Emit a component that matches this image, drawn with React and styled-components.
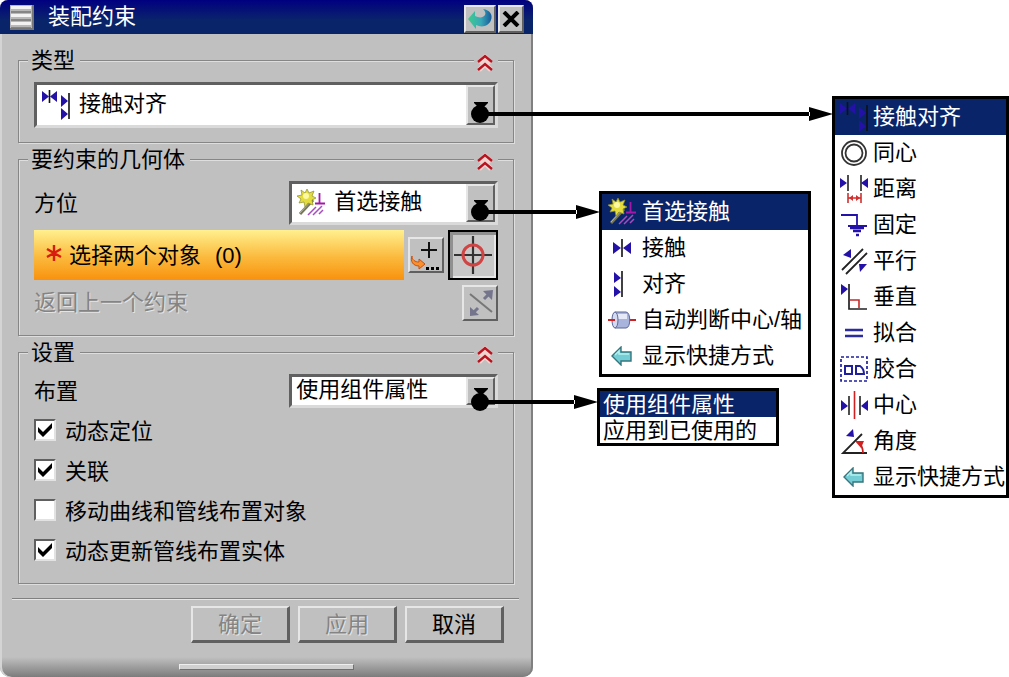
import React, {useState} from "react"
import styled, {createGlobalStyle, css} from "styled-components"

const FACE = "#c0c0c0"
const NAVY = "#0a246a"
const BLUE = "#2412a8"

const GlobalStyle = createGlobalStyle`
  * {
    box-sizing: border-box;
  }

  body {
    margin: 0;
    background: #fff;
    color: #000;
  }

  body, button, select, input {
    font-family: "Liberation Sans", "Noto Sans CJK SC", sans-serif;
    font-size: 22px;
    line-height: 24px;
  }
`

const raised = css`
  border: 2px solid;
  border-color: #e6e6e6 #606060 #606060 #e6e6e6;
  background: ${FACE};
`

const Page = styled.main`
  display: flex;
  align-items: flex-start;
`

const Dialog = styled.form`
  flex: 1;
  min-width: 400px;
  margin-right: 64px;
  border-radius: 8px 8px 10px 10px;
  background: linear-gradient(to top, #7c7c7c, ${FACE} 20px);
  box-shadow: inset 2px 0 #d4d4d4, inset -2px 0 #808080;
`

const TitleBar = styled.header`
  display: flex;
  align-items: center;
  gap: 2px;
  height: 34px;
  padding: 0 9px 0 10px;
  border-radius: 8px 8px 0 0;
  background: linear-gradient(#000080, ${NAVY} 60%);
  color: #fff;
`

const Title = styled.h1`
  flex: 1;
  margin: 0 0 0 12px;
  font-size: 22px;
  font-weight: 400;
  line-height: 24px;
`

const TitleButton = styled.button`
  ${raised}
  display: grid;
  place-items: center;
  width: ${({$wide}) => ($wide ? 32 : 26)}px;
  height: 28px;
  margin-top: 4px;
  padding: 0;
`

const Body = styled.div`
  display: flex;
  flex-direction: column;
  gap: 16px;
  padding: 26px 19px 0 18px;
`

const Group = styled.section`
  border: 1px solid #868686;
  box-shadow: inset 1px 1px #dedede, 1px 1px #dedede;
  padding: 1px 15px ${({$bottom}) => $bottom || 14}px;
`

const GroupHeader = styled.div`
  display: flex;
  justify-content: space-between;
  align-items: center;
  margin: -14px 0 10px -6px;
`

const GroupTitle = styled.h2`
  margin: 0;
  padding: 1px 5px 0 3px;
  background: ${FACE};
  font-size: 22px;
  font-weight: 400;
  line-height: 23px;
`

const CollapseButton = styled.button`
  display: grid;
  place-items: center;
  width: 24px;
  height: 24px;
  padding: 6px 2px 0 0;
  border: 0;
  background: ${FACE};
`

const Rows = styled.div`
  display: flex;
  flex-direction: column;
  gap: 5px;
`

const Row = styled.div`
  display: flex;
  align-items: center;
  justify-content: space-between;
  gap: 4px;
`

const RowLabel = styled.label`
  padding-top: 2px;
`

const SelectBox = styled.div`
  position: relative;
  display: flex;
  align-items: stretch;
  width: ${({$width}) => $width || "100%"};
  height: ${({$height}) => $height}px;
  border: 3px solid;
  border-color: #606060 #dadada #dadada #606060;
  background: #fff;
`

const SelectIcon = styled.span`
  display: grid;
  place-items: center;
  width: ${({$width}) => $width}px;
`

const SelectInput = styled.select`
  flex: 1;
  min-width: 0;
  padding: 0 0 2px 4px;
  border: 0;
  background: transparent;
  color: #000;
  appearance: none;
`

const DropButton = styled.button`
  ${raised}
  display: grid;
  place-items: center;
  width: 29px;
  padding: 0;
`

const PointerSvg = styled.svg`
  position: absolute;
  left: calc(100% - 24px);
  bottom: ${({$bottom}) => $bottom}px;
  z-index: 2;
  pointer-events: none;
`

const Prompt = styled.div`
  display: flex;
  flex: 1;
  align-items: center;
  height: 50px;
  padding: 2px 12px 0;
  background: linear-gradient(#fff08e, #fbb93c 55%, #f8920e);
`

const Star = styled.svg`
  margin: 0 7px 6px 0;
`

const Count = styled.span`
  margin-left: 14px;
`

const ToolButton = styled.button`
  ${raised}
  display: grid;
  place-items: center;
  width: 36px;
  height: 36px;
  padding: 0;
`

const PickButton = styled.button`
  display: grid;
  place-items: center;
  width: 50px;
  height: 50px;
  padding: 0;
  border: 2px solid #000;
  background: #c8c8c8;
  box-shadow: inset 3px 3px #909090, inset -2px -2px #e6e6e6;
`

const embossed = css`
  color: #848484;
  text-shadow: 1px 1px #e4e4e4;
`

const DisabledText = styled.span`
  ${embossed}
`

const CheckRow = styled.label`
  display: flex;
  align-items: center;
  gap: 9px;
  height: 40px;
`

const CheckText = styled.span`
  padding-top: 3px;
`

const CheckList = styled.div`
  padding-top: 2px;
`

const CheckInput = styled.input`
  width: 22px;
  height: 22px;
  margin: 0;
  border: 2px solid;
  border-color: #606060 #e2e2e2 #e2e2e2 #606060;
  background: #fff;
  appearance: none;

  &:checked {
    background: #fff
      url("data:image/svg+xml,%3Csvg xmlns='http://www.w3.org/2000/svg' viewBox='0 0 18 18'%3E%3Cpath d='M2 6l5 5 9-9v5l-9 9-5-5z'/%3E%3C/svg%3E")
      center / 18px no-repeat;
  }
`

const Divider = styled.hr`
  height: 2px;
  margin: 14px 14px 6px 12px;
  border: 0;
  background: linear-gradient(#808080 50%, #e6e6e6 50%);
`

const Footer = styled.footer`
  display: flex;
  justify-content: flex-end;
  gap: 8px;
  padding-right: 29px;
`

const FooterButton = styled.button`
  ${raised}
  width: 99px;
  height: 37px;
  padding: 2px 0 0;
  border-right-width: 3px;
  border-bottom-width: 3px;
  color: #000;

  &:disabled {
    ${embossed}
  }
`

const Grip = styled.div`
  width: 33%;
  height: 6px;
  margin: 21px auto 0;
  border: 1px solid;
  border-color: #eee #707070 #707070 #eee;
  background: #d0d0d0;
`

const GripArea = styled.div`
  height: 34px;
  overflow: hidden;
`

const MiddleMenus = styled.div`
  display: flex;
  flex-direction: column;
  gap: 11px;
  width: 214px;
  margin: 191px 21px 0 0;
`

const Menu = styled.ul`
  width: ${({$width}) => $width}px;
  margin: ${({$top}) => $top || 0}px 0 0;
  padding: 0;
  border: 3px solid #000;
  background: #fff;
  list-style: none;
  align-self: ${({$end}) => ($end ? "flex-end" : "flex-start")};
`

const MenuButton = styled.button`
  display: flex;
  align-items: center;
  width: 100%;
  height: ${({$compact}) => ($compact ? 26 : 36)}px;
  padding: ${({$compact}) => ($compact ? "2px 0 0 3px" : "0")};
  border: 0;
  background: ${({$active}) => ($active ? NAVY : "#fff")};
  color: ${({$active}) => ($active ? "#fff" : "#000")};
  text-align: left;
  white-space: nowrap;
`

const MenuIcon = styled.span`
  display: grid;
  place-items: center;
  width: ${({$width}) => $width}px;
`

const ContactAlignIcon = () => (
  <svg width="30" height="32" viewBox="0 0 30 32">
    <path fill={BLUE} d="M1 2v11l7-5.500zM16 2v11L9 7.500zM20 6v12l7-6zM20 19v12l7-6z" />
    <path stroke="#111" strokeWidth="1.6" d="M8.5 1v13M28 4v26" />
  </svg>
)

const ContactIcon = () => (
  <svg width="18" height="20" viewBox="0 0 18 20">
    <path fill={BLUE} d="M0 4v12l8-6zM18 4v12l-8-6z" />
    <path stroke="#111" strokeWidth="1.6" d="M9 1v18" />
  </svg>
)

const AlignIcon = () => (
  <svg width="22" height="28" viewBox="0 0 22 28">
    <path fill={BLUE} d="M3 2v11l7-5zM3 16v11l7-5z" />
    <path stroke="#111" strokeWidth="1.6" d="M11 1v26" />
  </svg>
)

const SparkIcon = () => (
  <svg width="28" height="28" viewBox="0 0 28 28">
    <path stroke="#77775c" strokeWidth="3" d="M3 25L16 11" />
    <path stroke="#b4b49a" d="M3 24L15 11" />
    <path
      fill="#e4dc3c"
      stroke="#8c8c28"
      strokeWidth=".7"
      d="M10 0l2 4 5-2-2 5 4 2-4 2 1 5-5-2-3 4-1-5-5 1 2-4-4-3 5-1-1-5 4 3z"
    />
    <circle cx="9" cy="7" r="3" fill="#fbf9a4" />
    <path stroke="#a418a8" strokeWidth="1.8" d="M22.500 4v10M18 14.500h10" />
    <path stroke="#a84cc0" strokeWidth="1.5" d="M11 26l8-8M16 26l9-9M22 25l4-4" />
  </svg>
)

const CylinderIcon = () => (
  <svg width="28" height="18" viewBox="0 0 28 18">
    <path stroke="#d02020" strokeWidth="2" d="M0 9h28" />
    <path fill="#a9b4dc" stroke="#5c6698" d="M7 1h11c5 0 5 16 0 16H7z" />
    <path fill="#e6eaf8" d="M8 3h11v5H8z" />
    <ellipse cx="7" cy="9" rx="3" ry="8" fill="#d4daf0" stroke="#5c6698" />
    <path stroke="#d02020" strokeWidth="2" d="M0 9h7" />
  </svg>
)

const ShortcutIcon = () => (
  <svg width="22" height="20" viewBox="0 0 22 20">
    <path
      fill="#74ccd4"
      stroke="#35757e"
      strokeWidth="1.4"
      d="M1 10l9-9v5h10v9H10v4z"
    />
    <path fill="none" stroke="#b4f0f0" strokeWidth="1.5" d="M4 9l4-4v3h10" />
  </svg>
)

const ConcentricIcon = () => (
  <svg width="28" height="28" viewBox="0 0 28 28" fill="none" stroke="#333">
    <circle cx="14" cy="14" r="12" strokeWidth="1.8" />
    <circle cx="14" cy="14" r="8.500" strokeWidth="1.8" />
  </svg>
)

const DistanceIcon = () => (
  <svg width="30" height="30" viewBox="0 0 30 30">
    <path fill={BLUE} d="M1 4v10l7-5zM29 4v10l-7-5z" />
    <path stroke="#222" strokeWidth="1.6" d="M9 1v16M22 1v16" />
    <path stroke="#d03030" strokeWidth="1.6" d="M9 19v10M22 19v10M9 24h13" />
    <path fill="#d03030" d="M10 24l4-3v6zM21 24l-4-3v6z" />
  </svg>
)

const FixIcon = () => (
  <svg width="28" height="26" viewBox="0 0 28 26" stroke={BLUE} fill="none">
    <path strokeWidth="1.8" d="M1 3h16v11M8 14h19" />
    <path strokeWidth="2.4" d="M10 16h14M13 19h8M16 23h3" />
  </svg>
)

const ParallelIcon = () => (
  <svg width="28" height="28" viewBox="0 0 28 28">
    <path stroke="#222" strokeWidth="1.8" d="M2 23L23 2M6 27L27 6" />
    <path fill={BLUE} d="M3 8l8-6v9zM19 17h8l-7 8z" />
  </svg>
)

const PerpendicularIcon = () => (
  <svg width="28" height="28" viewBox="0 0 28 28">
    <path fill={BLUE} d="M1 1v11l7-6z" />
    <path fill="none" stroke="#222" strokeWidth="1.7" d="M9 1v25h18" />
    <path fill="none" stroke="#c82828" strokeWidth="1.6" d="M10 17h9v8" />
  </svg>
)

const FitIcon = () => (
  <svg width="20" height="12" viewBox="0 0 20 12">
    <path stroke="#2c2ca0" strokeWidth="2.4" d="M1 3h18M1 9h18" />
  </svg>
)

const BondIcon = () => (
  <svg width="30" height="28" viewBox="0 0 30 28" fill="none" stroke="#20209c">
    <path strokeWidth="1.7" strokeDasharray="3 2" d="M2 2h26v24H2z" />
    <path strokeWidth="2" d="M6 11h7v8H6zM17 11h4c3 2 4 4 4 8h-8z" />
  </svg>
)

const CenterIcon = () => (
  <svg width="30" height="28" viewBox="0 0 30 28">
    <path fill={BLUE} d="M2 9v11l7-5zM29 9v11l-7-5z" />
    <path stroke="#222" strokeWidth="1.6" d="M10 5v19M21 5v19" />
    <path stroke="#d02020" strokeWidth="1.6" d="M15.500 0v28" />
  </svg>
)

const AngleIcon = () => (
  <svg width="28" height="28" viewBox="0 0 28 28">
    <path fill={BLUE} d="M6 9l7-7 1 8z" />
    <path fill="none" stroke="#222" strokeWidth="1.8" d="M22 7L3 26h24" />
    <path fill="none" stroke="#c82020" strokeWidth="1.8" d="M18 15c4 3 5 6 5 11" />
    <path fill="#d02020" d="M15 14l9 0-3 7z" />
  </svg>
)

const Pointer = ({length, bottom}) => (
  <PointerSvg width={length} height="20" $bottom={bottom} aria-hidden="true">
    <circle cx="9" cy="10" r="9" />
    <path d={`M9 8h${length - 32}v4H9zM${length - 24} 3v14L${length} 10z`} />
  </PointerSvg>
)

const Collapsible = ({title, children, bottom}) => (
  <Group $bottom={bottom}>
    <GroupHeader>
      <GroupTitle>{title}</GroupTitle>
      <CollapseButton type="button" aria-label={`折叠${title}`}>
        <svg width="16" height="18" viewBox="0 0 16 18" fill="none">
          <path stroke="#f0d4d0" strokeWidth="5" d="M2 9l6-6 6 6M2 16l6-6 6 6" />
          <path stroke="#b81420" strokeWidth="2.4" d="M1 8l7-6 7 6M1 16l7-6 7 6" />
        </svg>
      </CollapseButton>
    </GroupHeader>
    {children}
  </Group>
)

const Dropdown = ({id, label, options, icon, iconWidth, width, height, pointer}) => (
  <SelectBox $width={width} $height={height}>
    {icon && <SelectIcon $width={iconWidth}>{icon}</SelectIcon>}
    <SelectInput id={id} aria-label={label}>
      {options.map(option => (
        <option key={option}>{option}</option>
      ))}
    </SelectInput>
    <DropButton type="button" aria-label={`展开${label}`}>
      <svg width="14" height="7" viewBox="0 0 14 7">
        <path d="M0 0h14v1L8 7H6L0 1z" />
      </svg>
    </DropButton>
    <Pointer {...pointer} />
  </SelectBox>
)

const OptionMenu = ({items, label, iconWidth, compact, ...rest}) => (
  <Menu aria-label={label} {...rest}>
    {items.map(({text, Icon}, index) => (
      <li key={text}>
        <MenuButton type="button" $active={index === 0} $compact={compact}>
          {Icon && (
            <MenuIcon $width={iconWidth}>
              <Icon />
            </MenuIcon>
          )}
          {text}
        </MenuButton>
      </li>
    ))}
  </Menu>
)

const typeItems = [
  {text: "接触对齐", Icon: ContactAlignIcon},
  {text: "同心", Icon: ConcentricIcon},
  {text: "距离", Icon: DistanceIcon},
  {text: "固定", Icon: FixIcon},
  {text: "平行", Icon: ParallelIcon},
  {text: "垂直", Icon: PerpendicularIcon},
  {text: "拟合", Icon: FitIcon},
  {text: "胶合", Icon: BondIcon},
  {text: "中心", Icon: CenterIcon},
  {text: "角度", Icon: AngleIcon},
  {text: "显示快捷方式", Icon: ShortcutIcon},
]

const orientationItems = [
  {text: "首选接触", Icon: SparkIcon},
  {text: "接触", Icon: ContactIcon},
  {text: "对齐", Icon: AlignIcon},
  {text: "自动判断中心/轴", Icon: CylinderIcon},
  {text: "显示快捷方式", Icon: ShortcutIcon},
]

const arrangementItems = [{text: "使用组件属性"}, {text: "应用到已使用的"}]

const names = items => items.map(item => item.text)

const initialSettings = [
  {label: "动态定位", checked: true},
  {label: "关联", checked: true},
  {label: "移动曲线和管线布置对象", checked: false},
  {label: "动态更新管线布置实体", checked: true},
]

const App = () => {
  const [settings, setSettings] = useState(initialSettings)

  const toggle = label =>
    setSettings(
      settings.map(item =>
        item.label === label ? {...item, checked: !item.checked} : item
      )
    )

  return (
    <Page>
      <GlobalStyle />
      <Dialog onSubmit={event => event.preventDefault()}>
        <TitleBar>
          <svg width="24" height="25" viewBox="0 0 24 25">
            <path fill="#777" d="M0 0h24v25H0z" />
            <path fill="#b8b8b8" d="M0 0h22v23H0z" />
            <path fill="#f2f2f2" d="M1 1h20v3H1zM1 9h20v3H1zM1 17h20v3H1z" />
            <path fill="#858585" d="M1 6h20v2H1zM1 14h20v2H1zM1 22h20v1H1z" />
          </svg>
          <Title>装配约束</Title>
          <TitleButton type="button" $wide aria-label="重置">
            <svg width="26" height="24" viewBox="0 0 26 24">
              <defs>
                <linearGradient id="reset">
                  <stop offset="0" stopColor="#3ccc8c" />
                  <stop offset=".55" stopColor="#38a8b8" />
                  <stop offset="1" stopColor="#185898" />
                </linearGradient>
              </defs>
              <path
                fill="url(#reset)"
                d="M1 12l7-8v5c4 2 8 2 10-1 1-2 0-4-2-6 7 1 10 6 8 11-2 6-9 8-15 5v4z"
              />
            </svg>
          </TitleButton>
          <TitleButton type="button" aria-label="关闭">
            <svg width="18" height="16" viewBox="0 0 18 16">
              <path stroke="#000" strokeWidth="4" d="M2 1l14 14M16 1L2 15" />
            </svg>
          </TitleButton>
        </TitleBar>

        <Body>
          <Collapsible title="类型">
            <Dropdown
              label="类型"
              options={names(typeItems)}
              icon={<ContactAlignIcon />}
              iconWidth={38}
              height={46}
              pointer={{length: 362, bottom: 1}}
            />
          </Collapsible>

          <Collapsible title="要约束的几何体">
            <Rows>
              <Row>
                <RowLabel htmlFor="orientation">方位</RowLabel>
                <Dropdown
                  id="orientation"
                  label="方位"
                  options={names(orientationItems)}
                  icon={<SparkIcon />}
                  iconWidth={38}
                  width="45%"
                  height={44}
                  pointer={{length: 129, bottom: 0}}
                />
              </Row>
              <Row>
                <Prompt>
                  <Star width="16" height="16" viewBox="0 0 16 16">
                    <path
                      stroke="#d81c10"
                      strokeWidth="2.400"
                      d="M8 0v16M1 4l14 8M15 4L1 12"
                    />
                  </Star>
                  选择两个对象
                  <Count>(0)</Count>
                </Prompt>
                <ToolButton type="button" aria-label="点构造器">
                  <svg width="32" height="32" viewBox="0 0 32 32">
                    <path stroke="#111" strokeWidth="2" d="M19 3v16M11 11h16" />
                    <path
                      fill="#f89030"
                      stroke="#c85010"
                      d="M2 17c0 4 3 6 7 6v-3l6 5-6 5v-3c-6 0-9-5-7-10z"
                    />
                    <path d="M16 28h3v3h-3zM21 28h3v3h-3zM26 28h3v3h-3z" />
                  </svg>
                </ToolButton>
                <PickButton type="button" aria-label="选择对象">
                  <svg width="40" height="40" viewBox="0 0 40 40" fill="none">
                    <path stroke="#333" strokeWidth="2.200" d="M20 1v38M1 20h38" />
                    <circle cx="20" cy="20" r="10" stroke="#d04444" strokeWidth="3" />
                  </svg>
                </PickButton>
              </Row>
              <Row>
                <DisabledText>返回上一个约束</DisabledText>
                <ToolButton type="button" disabled aria-label="返回上一个约束">
                  <svg width="30" height="30" viewBox="0 0 30 30">
                    <path stroke="#777" strokeWidth="2" d="M5 6l22 18" />
                    <path stroke="#74748c" strokeWidth="3" d="M19 11l5-5M13 20l-6 6" />
                    <path fill="#74748c" d="M18 3l10-1-1 10zM5 19l9 8-9 1z" />
                  </svg>
                </ToolButton>
              </Row>
            </Rows>
          </Collapsible>

          <Collapsible title="设置" bottom={13}>
            <Row>
              <RowLabel htmlFor="arrangement">布置</RowLabel>
              <Dropdown
                id="arrangement"
                label="布置"
                options={names(arrangementItems)}
                width="45%"
                height={34}
                pointer={{length: 127, bottom: -7}}
              />
            </Row>
            <CheckList>
              {settings.map(({label, checked}) => (
                <CheckRow key={label}>
                  <CheckInput
                    type="checkbox"
                    checked={checked}
                    onChange={() => toggle(label)}
                  />
                  <CheckText>{label}</CheckText>
                </CheckRow>
              ))}
            </CheckList>
          </Collapsible>
        </Body>

        <Divider />
        <Footer>
          <FooterButton type="submit" disabled>确定</FooterButton>
          <FooterButton type="button" disabled>应用</FooterButton>
          <FooterButton type="button">取消</FooterButton>
        </Footer>
        <GripArea>
          <Grip />
        </GripArea>
      </Dialog>

      <MiddleMenus>
        <OptionMenu
          label="方位"
          items={orientationItems}
          iconWidth={40}
          $width={212}
          $end
        />
        <OptionMenu label="布置" items={arrangementItems} compact $width={182} />
      </MiddleMenus>
      <OptionMenu
        label="类型"
        items={typeItems}
        iconWidth={38}
        $width={177}
        $top={96}
      />
    </Page>
  )
}

export default App
